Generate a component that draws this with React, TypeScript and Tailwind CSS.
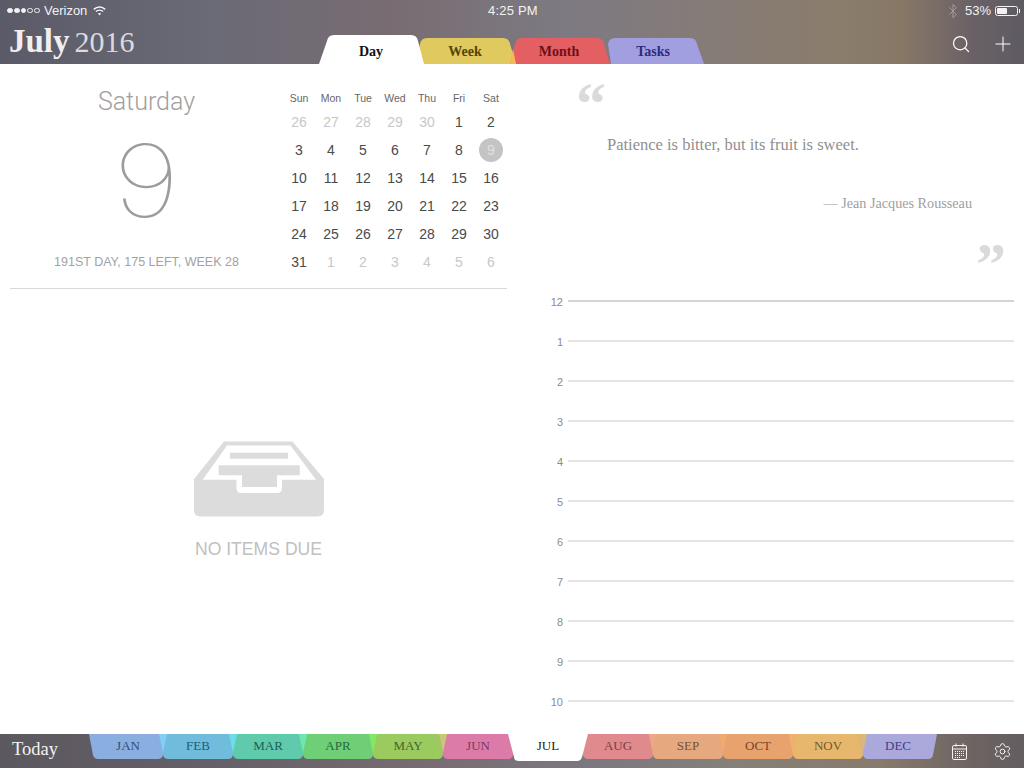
import { Bluetooth, Plus, Search, Settings } from 'lucide-react'

const serif = "font-['Liberation_Serif',serif]"

const topTabs = [
  { label: 'Day', fill: '#ffffff', text: '#111111', top: 0, tl: 1, tr: 95, bl: -5, br: 100, z: 'z-10', overlap: '' },
  { label: 'Week', fill: '#e0c95f', text: '#574406', top: 3, tl: 0, tr: 93, bl: -2, br: 98, z: '', overlap: '' },
  { label: 'Month', fill: '#e35f62', text: '#6e1016', top: 3, tl: 1, tr: 93, bl: -2, br: 98, z: '', overlap: '#f5b95a' },
  { label: 'Tasks', fill: '#a29fe0', text: '#2f2a80', top: 3, tl: 0, tr: 92, bl: 5, br: 98, z: '', overlap: '' },
]

const months = [
  { label: 'JAN', fill: '#8aaee0', text: '#2f4f78', overlap: '' },
  { label: 'FEB', fill: '#6fbcdd', text: '#245a78', overlap: '#86cdf6' },
  { label: 'MAR', fill: '#5fcbac', text: '#1d5f55', overlap: '#6fdcee' },
  { label: 'APR', fill: '#6fcf76', text: '#246a40', overlap: '#6ee8b0' },
  { label: 'MAY', fill: '#9bcb5e', text: '#46652a', overlap: '#80ea68' },
  { label: 'JUN', fill: '#dd7ba8', text: '#7a3a63', overlap: '#c8c878' },
  { label: 'JUL', fill: '#ffffff', text: '#222222', overlap: '' },
  { label: 'AUG', fill: '#e08a8e', text: '#7c3d42', overlap: '' },
  { label: 'SEP', fill: '#e6a97f', text: '#76513a', overlap: '#eca688' },
  { label: 'OCT', fill: '#e8a26e', text: '#74452a', overlap: '#f0aa70' },
  { label: 'NOV', fill: '#e6b76c', text: '#76592e', overlap: '#f2b070' },
  { label: 'DEC', fill: '#aba8dc', text: '#3e3d82', overlap: '#d8b87c' },
]

const weeks = [
  [26, 27, 28, 29, 30, 1, 2],
  [3, 4, 5, 6, 7, 8, 9],
  [10, 11, 12, 13, 14, 15, 16],
  [17, 18, 19, 20, 21, 22, 23],
  [24, 25, 26, 27, 28, 29, 30],
  [31, 1, 2, 3, 4, 5, 6],
]

const hours = [12, 1, 2, 3, 4, 5, 6, 7, 8, 9, 10]

function TopTab({ tab, prevRight }: { tab: (typeof topTabs)[number]; prevRight: number }) {
  const o = 12
  const h = 29
  const d = `M${tab.bl + o} ${h} L${tab.tl + o + 2} ${tab.top + 6} Q${tab.tl + o + 3} ${tab.top} ${tab.tl + o + 9} ${tab.top} L${tab.tr + o - 8} ${tab.top} Q${tab.tr + o - 2} ${tab.top} ${tab.tr + o - 1} ${tab.top + 6} L${tab.br + o} ${h} Z`
  return (
    <div className={`relative h-[29px] w-[94px] ${tab.z}`}>
      <svg className="absolute left-[-12px] top-0" width="124" height="29" viewBox="0 0 124 29">
        <path d={d} fill={tab.fill} />
        {tab.overlap ? <path d={`M${tab.bl + o} ${h} L${o + 1} 14 L${prevRight + o} ${h} Z`} fill={tab.overlap} /> : null}
      </svg>
      <div
        className={`relative flex h-full items-center justify-center pt-[4px] text-[14px] font-bold ${serif}`}
        style={{ color: tab.text }}
      >
        {tab.label}
      </div>
    </div>
  )
}

function MonthTab({ m }: { m: (typeof months)[number] }) {
  const active = m.label === 'JUL'
  const h = active ? 27 : 25
  const c = 45
  const d = active
    ? `M${c - 40} 0 L${c + 40} 0 L${c + 34} ${h - 4} Q${c + 33} ${h} ${c + 29} ${h} L${c - 29} ${h} Q${c - 34} ${h} ${c - 34} ${h - 4} Z`
    : `M${c - 39} 0 L${c + 39} 0 L${c + 35} ${h - 4} Q${c + 34} ${h} ${c + 30} ${h} L${c - 30} ${h} Q${c - 34} ${h} ${c - 35} ${h - 4} Z`
  return (
    <div className={`relative h-[25px] w-[70px] ${active ? 'z-10' : ''}`}>
      <svg className="absolute left-[-10px] top-0 overflow-visible" width="90" height="27" viewBox="0 0 90 27">
        <path d={d} fill={m.fill} />
        {m.overlap ? <path d={`M${c - 39} 0 L${c - 31} 0 L${c - 35} 19 Z`} fill={m.overlap} /> : null}
      </svg>
      <div
        className={`relative flex h-full items-center justify-center pb-[2px] text-[13px] ${serif}`}
        style={{ color: m.text }}
      >
        {m.label}
      </div>
    </div>
  )
}

function StatusBar() {
  return (
    <div className="relative flex h-[21px] items-center pl-[7px] pr-[6px] font-['Liberation_Sans',sans-serif] text-[13px] text-[#f2f2f2]">
      <div className="flex items-center gap-[1px]">
        {[0, 1, 2, 3, 4].map((i) => (
          <span
            key={i}
            className={`h-[5.8px] w-[5.8px] rounded-full border border-[#f2f2f2] ${i < 3 ? 'bg-[#f2f2f2]' : ''}`}
          />
        ))}
      </div>
      <span className="ml-[4px]">Verizon</span>
      <svg className="ml-[6px]" width="13" height="10" viewBox="0 0 13 10" fill="none" stroke="#f2f2f2" strokeWidth="1.5">
        <path d="M0.8 3.4 C4 0.3 9 0.3 12.2 3.4" />
        <path d="M2.9 5.5 C4.9 3.7 8.1 3.7 10.1 5.5" />
        <path d="M6.5 9.6 L4.8 7.6 C5.8 6.8 7.2 6.8 8.2 7.6 Z" fill="#f2f2f2" stroke="none" />
      </svg>
      <span className="absolute left-0 right-0 pl-[2px] text-center tracking-[0.2px]">4:25 PM</span>
      <div className="ml-auto flex items-center">
        <Bluetooth size={16} strokeWidth={1.25} color="#aaa6a2" />
        <span className="ml-[4px]">53%</span>
        <div className="relative ml-[4px] h-[10px] w-[23px] rounded-[2.5px] border border-[#f2f2f2] p-[1px]">
          <div className="h-full w-[53%] rounded-[1px] bg-[#f2f2f2]" />
          <div className="absolute right-[-3px] top-[2px] h-[4px] w-[1.5px] bg-[#f2f2f2]" />
        </div>
      </div>
    </div>
  )
}

function Header() {
  return (
    <header className="h-[64px] shrink-0 bg-[linear-gradient(90deg,#5b5a68_0%,#6a6a76_20%,#786c72_38%,#7d7a82_55%,#857b78_68%,#8a7d6c_82%,#877866_88%,#6a6166_95%,#5e5a62_100%)]">
      <StatusBar />
      <div className="flex h-[43px] items-start">
        <div className={`flex w-[324px] items-baseline pl-[9px] text-[#f1eeee] ${serif}`}>
          <span className="text-[33px] font-bold leading-[40px]">July</span>
          <span className="ml-[5px] text-[30px] leading-[40px] text-[#dcdade]">2016</span>
        </div>
        <div className="mt-[14px] flex">
          {topTabs.map((tab, i) => (
            <TopTab key={tab.label} tab={tab} prevRight={i > 0 ? topTabs[i - 1].br - 94 : 0} />
          ))}
        </div>
        <div className="ml-auto flex items-center gap-[20px] pr-[9px] pt-[11px] text-white">
          <Search size={20} strokeWidth={1.5} />
          <Plus size={24} strokeWidth={1} />
        </div>
      </div>
    </header>
  )
}

function DateSummary() {
  return (
    <div className="flex w-[273px] flex-col items-center font-['Liberation_Sans',sans-serif] text-[#a6a6a6]">
      <div className="mt-[22px] font-['Roboto',sans-serif] text-[25px] font-light leading-[32px] text-[#a0a0a0]">Saturday</div>
      <div className="mt-[7px] scale-x-[1.18] font-['Inter',sans-serif] text-[100px] font-thin leading-[112px] text-[#9c9c9c]">9</div>
      <div className="mt-[17px] text-[12.5px] leading-[16px] text-[#a2a2a2]">191ST DAY, 175 LEFT, WEEK 28</div>
    </div>
  )
}

function MiniCalendar() {
  return (
    <div className="w-[224px] pt-[26px] font-['Liberation_Sans',sans-serif]">
      <div className="grid grid-cols-7 text-center text-[10.5px] leading-[16px] text-[#666666]">
        {['Sun', 'Mon', 'Tue', 'Wed', 'Thu', 'Fri', 'Sat'].map((d) => (
          <div key={d}>{d}</div>
        ))}
      </div>
      <div className="mt-[2px] grid grid-cols-7 text-center text-[14px]">
        {weeks.flatMap((week, w) =>
          week.map((n, i) => {
            const muted = (w === 0 && n > 20) || (w === 5 && n < 20)
            const selected = w === 1 && n === 9
            return (
              <div key={`${w}-${i}`} className="flex h-[28px] items-center justify-center">
                <span
                  className={
                    selected
                      ? 'flex h-[24px] w-[24px] items-center justify-center rounded-full bg-[#c4c4c4] text-[#e0e0e0]'
                      : muted
                        ? 'text-[#c8c8c8]'
                        : 'text-[#4a4a4a]'
                  }
                >
                  {n}
                </span>
              </div>
            )
          }),
        )}
      </div>
    </div>
  )
}

function EmptyState() {
  return (
    <div className="flex flex-col items-center pt-[152px]">
      <svg width="130" height="76" viewBox="0 0 130 76">
        <path
          d="M30 0.5 L98.5 0.5 L130 38 L130 69 Q130 75.5 123.5 75.5 L6.5 75.5 Q0 75.5 0 69 L0 38 Z"
          fill="#dcdcdc"
        />
        <path
          d="M33 4.5 L96.5 4.5 L122 38.7 L88 38.7 L88 47 Q88 52 83 52 L47 52 Q42.5 52 42.5 47 L42.5 38.7 L8.7 38.7 Z"
          fill="#ffffff"
        />
        <rect x="36" y="11.7" width="58" height="6" fill="#dcdcdc" />
        <rect x="24.7" y="24.3" width="81" height="10" fill="#dcdcdc" />
        <rect x="48" y="34" width="35" height="12" fill="#dcdcdc" />
      </svg>
      <div className="mt-[22px] font-['Liberation_Sans',sans-serif] text-[17.6px] leading-[20px] text-[#c0c0c0]">NO ITEMS DUE</div>
    </div>
  )
}

function QuoteBlock() {
  return (
    <div className="relative h-[217px] font-['Liberation_Serif',serif]">
      <div className="h-[64px] pl-[64px] pt-[8px] text-[60px] font-bold leading-[64px] text-[#dadada]">“</div>
      <div className="pl-[95px] pt-[8px] text-[16.5px] leading-[18px] text-[#8f8f8f]">Patience is bitter, but its fruit is sweet.</div>
      <div className="pr-[52px] pt-[40px] text-right text-[14.2px] leading-[18px] text-[#a0a0a0]">— Jean Jacques Rousseau</div>
      <div className="pr-[18px] pt-[20px] text-right text-[60px] font-bold leading-[64px] text-[#dadada]">”</div>
    </div>
  )
}

function DayHours() {
  return (
    <div className="font-['Liberation_Sans',sans-serif]">
      {hours.map((h) => (
        <div key={h} className="flex h-[40px] items-center pr-[10px]">
          <div className="w-[51px] pt-[3px] text-right text-[11px] text-[#8c8c8c]">{h}</div>
          <div className={`ml-[5px] h-[1.5px] flex-1 ${h === 12 ? 'bg-[#d4d4d4]' : 'bg-[#e4e4e4]'}`} />
        </div>
      ))}
    </div>
  )
}

function Footer() {
  return (
    <footer className="flex h-[34px] shrink-0 bg-[linear-gradient(90deg,#5c5860_0%,#666068_22%,#786c72_42%,#7c7880_58%,#858078_72%,#887a6c_86%,#6d6462_95%,#645c60_100%)]">
      <div className={`w-[93px] pl-[12px] pt-[2px] text-[18.5px] leading-[26px] text-[#f2f2f2] ${serif}`}>Today</div>
      <div className="flex">
        {months.map((m) => (
          <MonthTab key={m.label} m={m} />
        ))}
      </div>
      <div className="ml-auto flex items-center gap-[26px] pr-[12px]">
        <svg width="15" height="17" viewBox="0 0 15 17" fill="none" stroke="#f4f4f4" strokeWidth="1">
          <rect x="0.5" y="2.5" width="14" height="14" rx="1.5" />
          <path d="M0.5 6 H14.5" />
          <path d="M4 0.5 V3.5 M11 0.5 V3.5" />
          <path d="M3 8.5 H12 M3 10.5 H12 M3 12.5 H12 M3 14.5 H9" strokeDasharray="1 1" />
        </svg>
        <Settings size={19} strokeWidth={1.25} color="#f4f4f4" />
      </div>
    </footer>
  )
}

export default function App() {
  return (
    <div className="flex h-[768px] w-[1024px] flex-col overflow-hidden bg-white">
      <Header />
      <main className="flex min-h-0 flex-1">
        <section className="flex w-[512px] flex-col pl-[10px] pr-[5px]">
          <div className="flex h-[225px] border-b border-[#d9d9d9]">
            <DateSummary />
            <MiniCalendar />
          </div>
          <EmptyState />
        </section>
        <section className="flex-1">
          <QuoteBlock />
          <DayHours />
        </section>
      </main>
      <Footer />
    </div>
  )
}
